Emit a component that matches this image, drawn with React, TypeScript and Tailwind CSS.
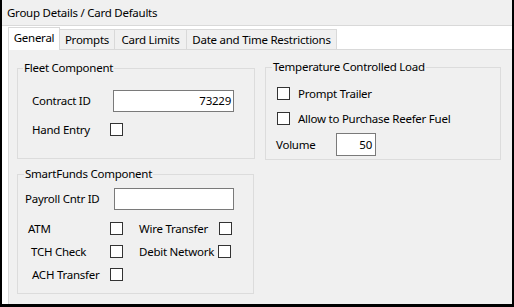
import React from 'react';

const font = { fontFamily: '"Noto Sans", "Open Sans", Arial, sans-serif' };

const Check = () => (
  <input
    type="checkbox"
    readOnly
    className="appearance-none w-[13px] h-[13px] border border-[#333333] bg-white shrink-0 m-0"
  />
);

const Box: React.FC<{ title: string; legendClass: string; className: string; children: React.ReactNode }> = ({
  title,
  legendClass,
  className,
  children,
}) => (
  <fieldset className={`border border-[#dcdcdc] ${className}`}>
    <legend className={`px-[1px] leading-[16px] ${legendClass}`}>{title}</legend>
    {children}
  </fieldset>
);

const tabs = [
  { label: 'Prompts', w: 'w-[55px]' },
  { label: 'Card Limits', w: 'w-[72px]' },
  { label: 'Date and Time Restrictions', w: 'w-[150px]' },
];

export default function App() {
  return (
    <div
      className="w-[514px] h-[307px] bg-black pl-[2px] pr-[2px] pb-[3px] text-[11.5px] tracking-[-0.25px] text-black"
      style={font}
    >
      <div className="h-full flex flex-col bg-white">
        {/* Title bar */}
        <div className="h-[26px] shrink-0 flex items-center pl-[5px] bg-[#f0f0f0] border-b border-[#d9d9d9]">
          Group Details / Card Defaults
        </div>

        {/* Tabs */}
        <div className="flex items-end h-[24px] pt-[1px] pl-[6px] shrink-0">
          <div className="w-[52px] h-[23px] bg-white border border-b-0 border-[#d9d9d9] flex justify-center pt-[1px]">
            General
          </div>
          {tabs.map((t) => (
            <div
              key={t.label}
              className={`${t.w} h-[21px] bg-[#f0f0f0] border border-l-0 border-[#d9d9d9] flex justify-center pt-[1px] whitespace-nowrap`}
            >
              {t.label}
            </div>
          ))}
          <div className="flex-1 border-b border-[#d9d9d9]" />
        </div>

        {/* Tab panel */}
        <div className="flex-1 ml-[6px] bg-[#f0f0f0] border-l border-[#d9d9d9] pl-[8px] pt-[9px]">
          <div className="flex items-start gap-[10px]">
            {/* Fleet Component */}
            <Box title="Fleet Component" legendClass="ml-[5px]" className="w-[238px] h-[99px] mt-[1px]">
              <div className="pl-[14px] pt-[14px]">
                <div className="flex items-center h-[22px]">
                  <span className="w-[81px]">Contract ID</span>
                  <div className="w-[121px] h-[22px] bg-white border border-[#7a7a7a] flex items-center justify-end pr-[2px]">
                    73229
                  </div>
                </div>
                <div className="flex items-center h-[13px] mt-[11px]">
                  <span className="w-[78px]">Hand Entry</span>
                  <Check />
                </div>
              </div>
            </Box>

            {/* Temperature Controlled Load */}
            <Box title="Temperature Controlled Load" legendClass="ml-[6px]" className="w-[236px] h-[101px]">
              <div className="pl-[10px] pt-[12px]">
                <div className="flex items-center h-[13px] ml-[1px] gap-[8px]">
                  <Check />
                  <span>Prompt Trailer</span>
                </div>
                <div className="flex items-center h-[13px] ml-[1px] gap-[8px] mt-[12px]">
                  <Check />
                  <span className="whitespace-nowrap">Allow to Purchase Reefer Fuel</span>
                </div>
                <div className="flex items-center h-[23px] mt-[8px]">
                  <span className="w-[60px]">Volume</span>
                  <div className="w-[40px] h-[23px] bg-white border border-[#7a7a7a] flex items-center justify-end pr-[3px]">
                    50
                  </div>
                </div>
              </div>
            </Box>
          </div>

          {/* SmartFunds Component */}
          <Box title="SmartFunds Component" legendClass="ml-[6px]" className="w-[237px] h-[128px] mt-[6px]">
            <div className="pl-[7px] pt-[6px]">
              <div className="flex items-center h-[22px]">
                <span className="w-[89px] whitespace-nowrap">Payroll Cntr ID</span>
                <div className="w-[120px] h-[22px] bg-white border border-[#7a7a7a]" />
              </div>
            </div>
            <div className="flex flex-col gap-[10px] mt-[12px]">
              <div className="flex items-center h-[13px]">
                <span className="w-[92px] pl-[10px]">ATM</span>
                <Check />
                <span className="w-[16px]" />
                <span className="w-[80px] whitespace-nowrap">Wire Transfer</span>
                <Check />
              </div>
              <div className="flex items-center h-[13px]">
                <span className="w-[92px] pl-[13px]">TCH Check</span>
                <Check />
                <span className="w-[16px]" />
                <span className="w-[79px] whitespace-nowrap">Debit Network</span>
                <Check />
              </div>
              <div className="flex items-center h-[13px]">
                <span className="w-[92px] pl-[14px] whitespace-nowrap">ACH Transfer</span>
                <Check />
              </div>
            </div>
          </Box>
        </div>
      </div>
    </div>
  );
}
